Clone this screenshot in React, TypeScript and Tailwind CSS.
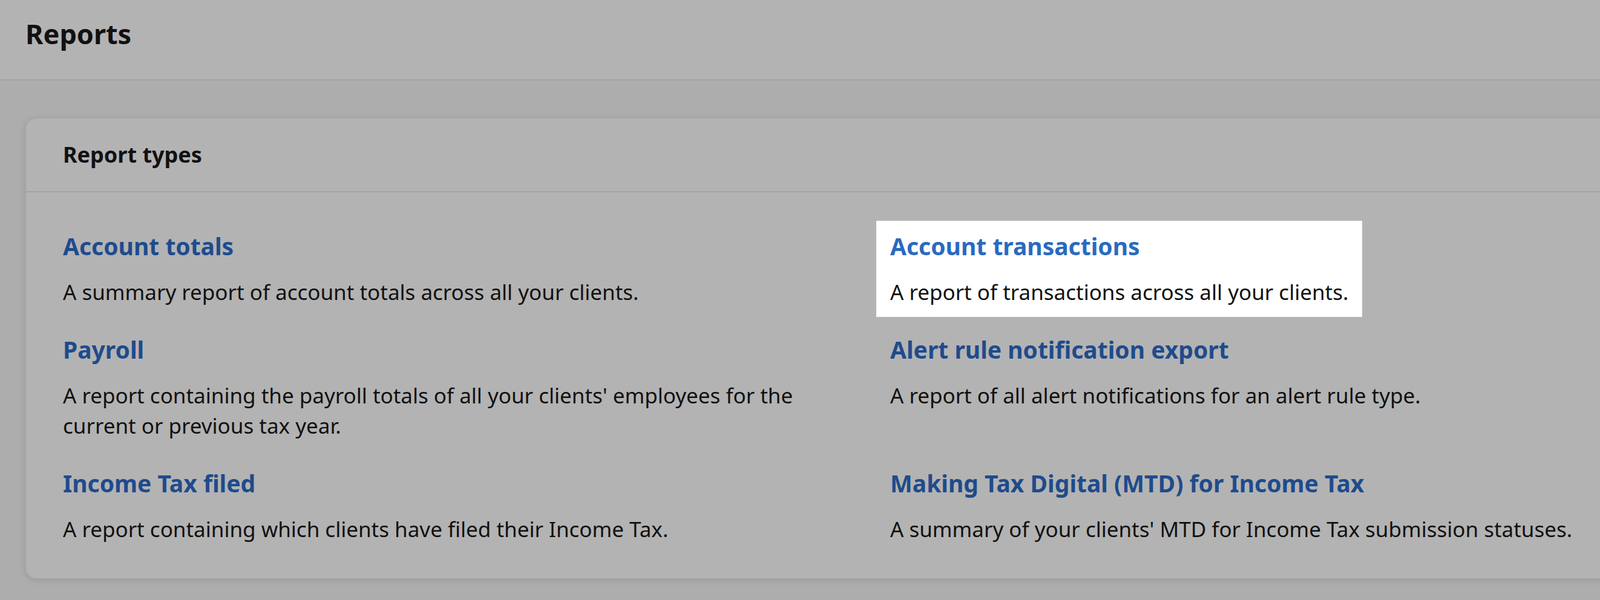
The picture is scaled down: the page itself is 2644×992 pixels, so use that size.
import React from 'react';

interface Report {
    title: string;
    description: string;
    active?: boolean;
}

const reports: Report[] = [
    { title: "Account totals", description: "A summary report of account totals across all your clients." },
    { title: "Account transactions", description: "A report of transactions across all your clients.", active: true },
    { title: "Payroll", description: "A report containing the payroll totals of all your clients' employees for the current or previous tax year." },
    { title: "Alert rule notification export", description: "A report of all alert notifications for an alert rule type." },
    { title: "Income Tax filed", description: "A report containing which clients have filed their Income Tax." },
    { title: "Making Tax Digital (MTD) for Income Tax", description: "A summary of your clients' MTD for Income Tax submission statuses." },
];

export default function App() {
    return (
        <div className="w-[2644px] h-[992px] overflow-hidden bg-[#adadad] text-[#111] font-['Lato',sans-serif]">
            {/* Page header */}
            <div className="h-[133px] bg-[#b3b3b3] border-b-2 border-[#a3a3a6] pl-[42px] pt-[26px]">
                <h1 className="text-[45px] leading-[60px] font-bold">Reports</h1>
            </div>

            {/* Card */}
            <div className="ml-[42px] mt-[62px] w-[2660px] bg-[#b3b3b3] rounded-[18px] shadow-[0_2px_12px_rgba(0,0,0,0.12)] border border-[#a6a6a9]">
                <div className="h-[122px] border-b-2 border-[#a3a3a6] pl-[61px] flex items-center">
                    <h2 className="text-[36px] font-bold">Report types</h2>
                </div>
                <div className="grid grid-cols-[1343px_1343px] gap-x-[24px] gap-y-[12px] pl-[38px] pt-[47px] pb-[40px]">
                    {reports.map((r) => (
                        <div
                            key={r.title}
                            className={`w-fit px-[23px] py-[16px] ${r.active ? "bg-white" : ""}`}
                        >
                            <div className={`text-[39px] leading-[52px] font-bold ${r.active ? "text-[#2a6ac0]" : "text-[#1f4b8c]"}`}>
                                {r.title}
                            </div>
                            <p className="mt-[25px] text-[35px] leading-[50px] max-w-[1260px]">{r.description}</p>
                        </div>
                    ))}
                </div>
            </div>
        </div>
    );
}
